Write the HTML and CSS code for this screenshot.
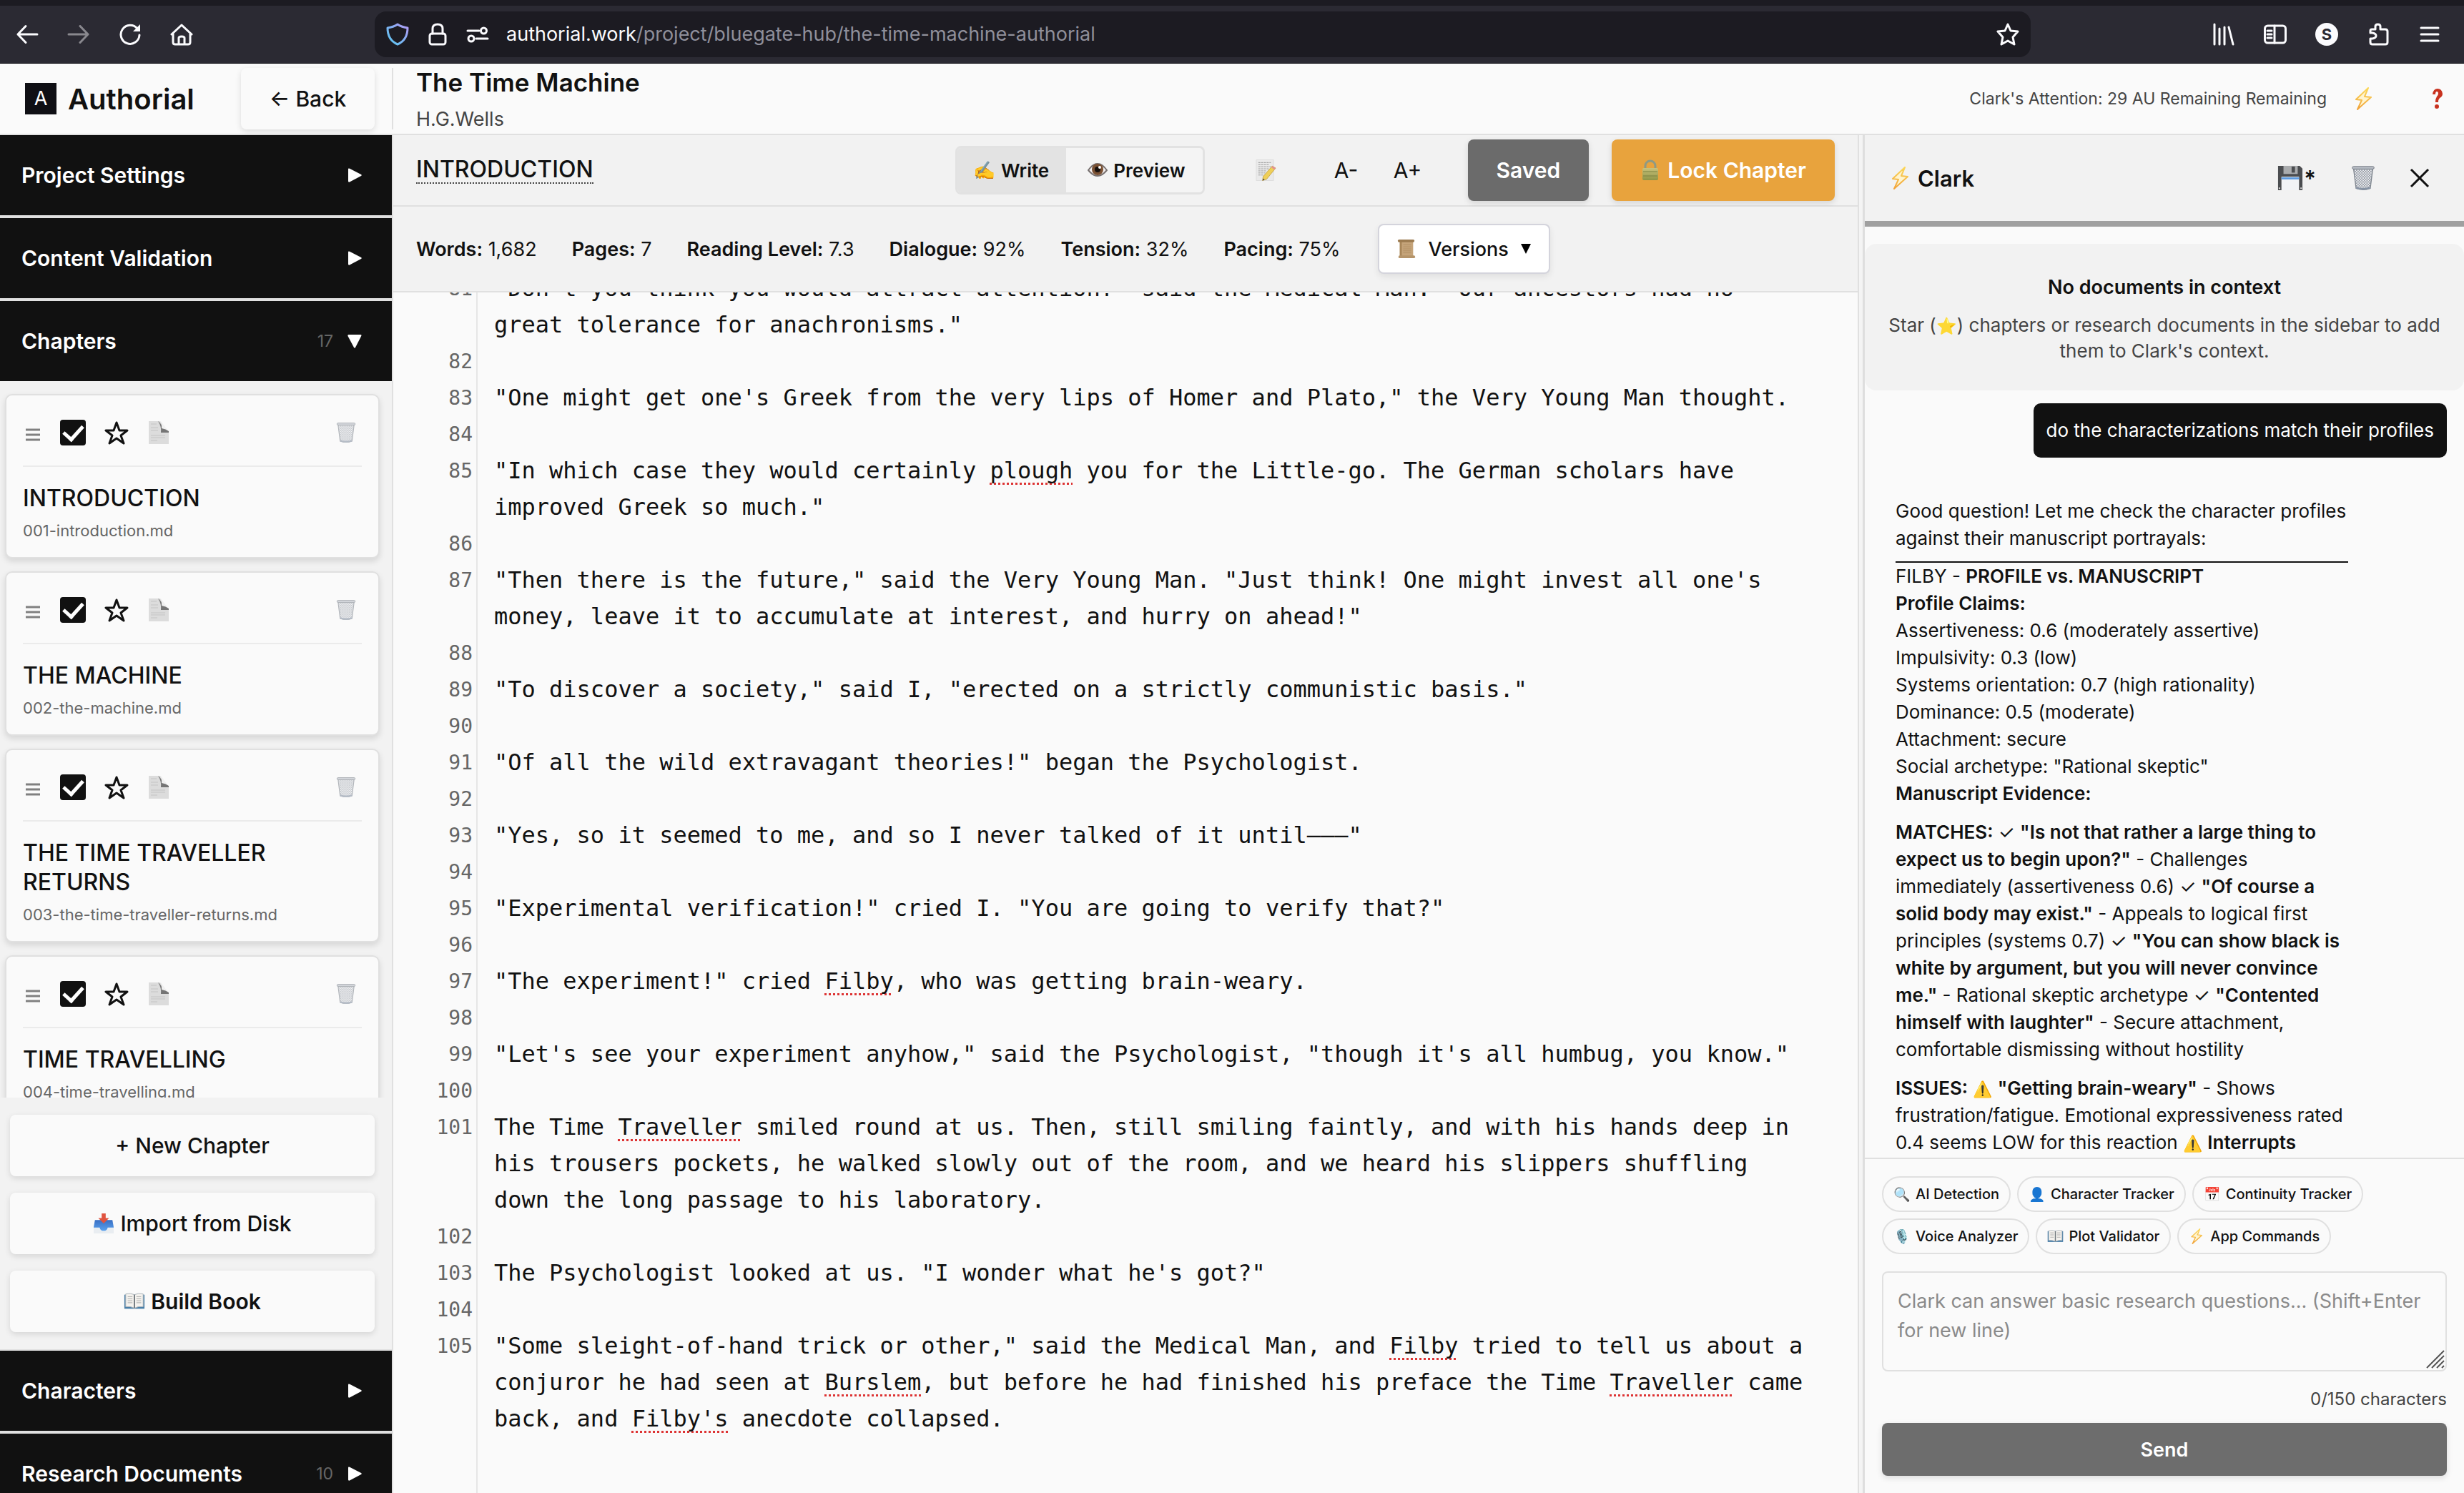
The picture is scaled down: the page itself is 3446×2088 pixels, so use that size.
FILE: index.html
```html
<!DOCTYPE html>
<html lang="en">
<head>
    <meta charset="UTF-8">
    <meta name="viewport" content="width=device-width, initial-scale=1.0">
    <title>The Time Machine - Authorial</title>
    <link rel="stylesheet" href="styles.css">
</head>
<body>
    <!-- Shared icons -->
    <svg class="sprite" aria-hidden="true">
        <defs>
            <linearGradient id="shield-fill" x1="1" y1="0" x2="0" y2="1">
                <stop offset="0" stop-color="#b69af5"/>
                <stop offset="0.5" stop-color="#7fb0f2"/>
                <stop offset="1" stop-color="#59c8f0"/>
            </linearGradient>
            <linearGradient id="bolt-fill" x1="0" y1="0" x2="0" y2="1">
                <stop offset="0" stop-color="#fbd85a"/>
                <stop offset="1" stop-color="#f1a33a"/>
            </linearGradient>
            <linearGradient id="brass" x1="0" y1="0" x2="0" y2="1">
                <stop offset="0" stop-color="#c9c27c"/>
                <stop offset="1" stop-color="#8f9445"/>
            </linearGradient>
            <linearGradient id="tray" x1="0" y1="0" x2="0" y2="1">
                <stop offset="0" stop-color="#3a6fc4"/>
                <stop offset="1" stop-color="#5aa2ee"/>
            </linearGradient>
            <pattern id="mesh" width="4" height="4" patternUnits="userSpaceOnUse">
                <path d="M0 0l4 4M4 0L0 4" stroke="#7d848e" stroke-width="0.8"/>
            </pattern>
        </defs>
        <symbol id="bolt" viewBox="0 0 28 32">
            <path d="M20 1L3 17l8 1-6 13 19-17-9-1z" fill="#fff4cf" stroke="url(#bolt-fill)" stroke-width="2" stroke-linejoin="round"/>
        </symbol>
        <symbol id="trash" viewBox="0 0 36 40">
            <path d="M3 5l4 31q11 4 22 0l4-31z" fill="#eef0f3"/>
            <path d="M3 5l4 31q11 4 22 0l4-31z" fill="url(#mesh)" stroke="#7f868f" stroke-width="1.5"/>
            <rect x="1" y="2" width="34" height="4" rx="2" fill="#b9bec6" stroke="#6a717b"/>
            <path d="M7 35q11 4 22 0" stroke="#8894a5" stroke-width="3" fill="none"/>
        </symbol>
        <symbol id="page" viewBox="0 0 28 32">
            <path d="M0 0h16l12 15v17H0z" fill="#dcdcdc"/>
            <path d="M16 0q3 5 2 10 5 1 10 5L17 0z" fill="#f0f0f0"/>
            <path d="M13 0q6 4 5 10 6 1 10 4l0 2H17q1-9-4-16z" fill="#757575"/>
            <path d="M3 4h8M3 20h20M3 23h20M3 27h9M3 9h10M3 13h10" stroke="#c4c4c4"/>
        </symbol>
        <symbol id="floppy" viewBox="0 0 38 38">
            <path d="M1 1h32l4 4v32H1z" fill="#4b4d50"/>
            <path d="M9 1h21v12H9z" fill="#a9abad"/>
            <rect x="21" y="2" width="5" height="9" fill="#4b4d50"/>
            <path d="M6 17h26v20H6z" fill="#f1f3f6"/>
            <path d="M6 18h26v3H6z" fill="#5d9be0"/>
            <path d="M2 33h2v2H2zM34 33h2v2h-2z" fill="#e4e4e4"/>
        </symbol>
        <symbol id="book" viewBox="0 0 32 26">
            <path d="M1 3h30v21H1z" fill="#4a7fa8"/>
            <path d="M3 2q7-2 13 1 6-3 13-1v19q-7-1-13 2-6-3-13-2z" fill="#f4f2ee" stroke="#a9b1b8"/>
            <path d="M16 3v20" stroke="#6f777d" stroke-width="2"/>
            <path d="M6 6h7M6 9h7M6 12h7M6 15h7M19 6h7M19 9h7M19 12h7M19 15h7" stroke="#aaa"/>
        </symbol>
        <symbol id="note" viewBox="0 0 30 32">
            <path d="M1 1h25v30H1z" fill="#eaeaea" stroke="#dddddd"/>
            <path d="M4 5h18M4 8h16M4 11h18M4 14h15M4 17h12M4 20h10M4 23h8" stroke="#999999" stroke-dasharray="3 1"/>
            <path d="M24 10l5 3-13 16-6 2 1-6z" fill="#efcf58" stroke="#b7902c" stroke-width="0.7"/>
            <path d="M24 10l5 3-2 2-4-3z" fill="#e58f95"/>
            <path d="M10 31l1-3 2 2z" fill="#444"/>
        </symbol>
        <symbol id="scroll" viewBox="0 0 28 30">
            <path d="M4 3h20v24H4z" fill="#c5a47a"/>
            <path d="M4 3h3v24H4z" fill="#a88659"/>
            <rect x="1" y="1" width="25" height="4" rx="2" fill="#9c7b50"/>
            <rect x="2" y="25" width="25" height="4" rx="2" fill="#b5946a"/>
            <path d="M9 9h12M9 12h12M9 15h12M9 18h12M9 21h12" stroke="#b08f63"/>
        </symbol>
        <symbol id="padlock" viewBox="0 0 28 30">
            <path d="M7 15V9a7 7 0 0 1 14 0v6" fill="none" stroke="#8e9a84" stroke-width="3"/>
            <rect x="3" y="12" width="22" height="17" rx="2" fill="url(#brass)"/>
            <path d="M4 17h20M4 23h20" stroke="#7d8340"/>
        </symbol>
        <symbol id="eye" viewBox="0 0 28 24">
            <path d="M1 12Q14-6 27 12 14 28 1 12z" fill="#f3efef" stroke="#77706f" stroke-width="2"/>
            <circle cx="14" cy="11" r="8" fill="#7a5133"/>
            <circle cx="14" cy="11" r="4" fill="#17100c"/>
            <circle cx="17" cy="8" r="2" fill="#fff"/>
        </symbol>
        <symbol id="inbox" viewBox="0 0 32 32">
            <path d="M3 11h26l2 11v9H1v-9z" fill="#e9edf1"/>
            <path d="M3 11h26l2 11h-9q-1 5-6 5t-6-5H1z" fill="url(#tray)"/>
            <path d="M13 1h6v7h5l-8 8-8-8h5z" fill="#e0533f"/>
        </symbol>
        <symbol id="drag" viewBox="0 0 20 18">
            <path d="M0 2h20M0 9h20M0 16h20" stroke="#808080" stroke-width="3"/>
        </symbol>
        <symbol id="star" viewBox="0 0 34 34">
            <path d="M17 3l4 11h11l-9 7 4 11-10-7-10 7 4-11-9-7h11z" fill="none" stroke="#111" stroke-width="3" stroke-linejoin="round"/>
        </symbol>
        <symbol id="right" viewBox="0 0 20 20">
            <path d="M1 1.5Q1 0 3 .8L19 9q1.500 1 0 2L3 19.500Q1 20 1 18.500z" fill="#fff"/>
        </symbol>
    </svg>

    <!-- Browser toolbar -->
    <header class="browser">
        <nav class="browser-icons" aria-label="Browser">
            <button class="bare" aria-label="Go back"><svg class="chrome-icon" viewBox="0 0 32 32"><path d="M30 16H3M14 4.500L3 16l11 11.500"/></svg></button>
            <button class="bare dim" aria-label="Go forward"><svg class="chrome-icon" viewBox="0 0 32 32"><path d="M2 16h27M18 4.500L29 16 18 27.500"/></svg></button>
            <button class="bare" aria-label="Reload"><svg class="chrome-icon" viewBox="0 0 32 32"><path d="M26 8a13 13 0 1 0 3 9"/><path d="M30 2v10H20z" fill="#fbfbfe" stroke="none"/></svg></button>
            <button class="bare" aria-label="Home"><svg class="chrome-icon" viewBox="0 0 32 32"><path d="M2 16L16 3l14 13M4 15v12q0 3 3 3h18q3 0 3-3V15M12 30V21q0-2 4-2t4 2v9"/></svg></button>
        </nav>
        <div class="urlbar">
            <svg class="chrome-icon shield" viewBox="0 0 32 32"><path d="M16 2q6 4 14 5 0 17-14 23Q2 24 2 7q8-1 14-5z"/></svg>
            <svg class="chrome-icon" viewBox="0 0 32 32"><rect x="5" y="15" width="22" height="15" rx="3"/><path d="M9 15V8q0-6 7-6t7 6v7"/></svg>
            <svg class="chrome-icon" viewBox="0 0 32 32"><path d="M2 11h16M14 22h16"/><circle cx="24.500" cy="11" r="4"/><circle cx="7" cy="22" r="4"/></svg>
            <p class="url">authorial.work<span>/project/bluegate-hub/the-time-machine-authorial</span></p>
            <button class="bare" aria-label="Bookmark"><svg class="chrome-icon" viewBox="0 0 32 32"><path d="M16 2l4 9 10 1-7 8 2 10-9-5-9 5 2-10-7-8 10-1z"/></svg></button>
        </div>
        <div class="browser-icons">
            <button class="bare" aria-label="Library"><svg class="chrome-icon" viewBox="0 0 32 32"><path d="M3 2v28M10 8v22M17 6v24M23 6l6 24"/></svg></button>
            <button class="bare" aria-label="Sidebars"><svg class="chrome-icon" viewBox="0 0 32 32"><rect x="1.500" y="4" width="29" height="24" rx="4"/><path d="M15 4v24M5 11h6M5 16h6M5 21h6"/></svg></button>
            <button class="avatar">S</button>
            <button class="bare" aria-label="Extensions"><svg class="chrome-icon" viewBox="0 0 32 32"><path d="M5 11q0-2 2-2h5V5q0-3 3.500-3T19 5v4h7q3 0 3 3v15q0 3-3 3H8q-3 0-3-3v-5h3q5-1 5-4t-5-4H5z"/></svg></button>
            <button class="bare" aria-label="Menu"><svg class="chrome-icon" viewBox="0 0 32 32"><path d="M4 7h24M4 16h24M4 25h24"/></svg></button>
        </div>
    </header>

    <!-- App header -->
    <header class="app-header">
        <div class="brand">
            <span class="logo">A</span>
            <span class="brand-name">Authorial</span>
            <button class="back">← Back</button>
        </div>
        <div class="project">
            <h1>The Time Machine</h1>
            <p>H.G.Wells</p>
        </div>
        <div class="account">
            <span>Clark's Attention: 29 AU Remaining Remaining</span>
            <button class="bare" aria-label="Toggle Clark"><svg class="bolt"><use href="#bolt"/></svg></button>
            <button class="bare help" aria-label="Help"><svg viewBox="0 0 16 28"><path d="M1 8Q2 0 8 0t7 7q0 4-4 6-2 2-2 6H5q0-5 2-8 2-2 2-4 0-3-2-3Q5 4 5 8z" fill="#c8321f"/><circle cx="7" cy="25" r="3" fill="#c8321f"/></svg></button>
        </div>
    </header>

    <div class="workspace">
        <aside class="sidebar">
            <button class="section">Project Settings <svg class="arrow"><use href="#right"/></svg></button>
            <button class="section">Content Validation <svg class="arrow"><use href="#right"/></svg></button>
            <button class="section open">Chapters <span class="count">17</span><svg class="arrow down"><use href="#right"/></svg></button>

            <div class="chapter-list">
                <article class="card">
                    <div class="card-head">
                        <svg class="drag"><use href="#drag"/></svg>
                        <input type="checkbox" class="check" aria-label="Include Introduction" checked>
                        <button class="bare" aria-label="Star"><svg class="star"><use href="#star"/></svg></button>
                        <button class="bare" aria-label="Notes"><svg class="page"><use href="#page"/></svg></button>
                        <button class="bare delete" aria-label="Delete"><svg class="bin"><use href="#trash"/></svg></button>
                    </div>
                    <h3>INTRODUCTION</h3>
                    <p>001-introduction.md</p>
                </article>
                <article class="card">
                    <div class="card-head">
                        <svg class="drag"><use href="#drag"/></svg>
                        <input type="checkbox" class="check" aria-label="Include The Machine" checked>
                        <button class="bare" aria-label="Star"><svg class="star"><use href="#star"/></svg></button>
                        <button class="bare" aria-label="Notes"><svg class="page"><use href="#page"/></svg></button>
                        <button class="bare delete" aria-label="Delete"><svg class="bin"><use href="#trash"/></svg></button>
                    </div>
                    <h3>THE MACHINE</h3>
                    <p>002-the-machine.md</p>
                </article>
                <article class="card">
                    <div class="card-head">
                        <svg class="drag"><use href="#drag"/></svg>
                        <input type="checkbox" class="check" aria-label="Include The Time Traveller Returns" checked>
                        <button class="bare" aria-label="Star"><svg class="star"><use href="#star"/></svg></button>
                        <button class="bare" aria-label="Notes"><svg class="page"><use href="#page"/></svg></button>
                        <button class="bare delete" aria-label="Delete"><svg class="bin"><use href="#trash"/></svg></button>
                    </div>
                    <h3>THE TIME TRAVELLER RETURNS</h3>
                    <p>003-the-time-traveller-returns.md</p>
                </article>
                <article class="card">
                    <div class="card-head">
                        <svg class="drag"><use href="#drag"/></svg>
                        <input type="checkbox" class="check" aria-label="Include Time Travelling" checked>
                        <button class="bare" aria-label="Star"><svg class="star"><use href="#star"/></svg></button>
                        <button class="bare" aria-label="Notes"><svg class="page"><use href="#page"/></svg></button>
                        <button class="bare delete" aria-label="Delete"><svg class="bin"><use href="#trash"/></svg></button>
                    </div>
                    <h3>TIME TRAVELLING</h3>
                    <p>004-time-travelling.md</p>
                </article>
            </div>

            <div class="chapter-actions">
                <button class="action">+ New Chapter</button>
                <button class="action"><svg class="inbox"><use href="#inbox"/></svg>Import from Disk</button>
                <button class="action strong"><svg class="book"><use href="#book"/></svg>Build Book</button>
            </div>

            <button class="section">Characters <svg class="arrow"><use href="#right"/></svg></button>
            <button class="section">Research Documents <span class="count">10</span><svg class="arrow"><use href="#right"/></svg></button>
        </aside>

        <main class="main">
            <div class="toolbar">
                <h2>INTRODUCTION</h2>
                <div class="tools">
                    <div class="toggle">
                        <button class="active"><span class="emoji">✍️</span>Write</button>
                        <button><svg class="eye"><use href="#eye"/></svg>Preview</button>
                    </div>
                    <button class="bare notes" aria-label="Notes"><svg class="note"><use href="#note"/></svg></button>
                    <div class="font-size">
                        <button class="bare">A-</button>
                        <button class="bare">A+</button>
                    </div>
                    <button class="btn saved">Saved</button>
                    <button class="btn lock"><svg class="padlock"><use href="#padlock"/></svg>Lock Chapter</button>
                </div>
            </div>

            <div class="stats">
                <span><b>Words:</b> 1,682</span>
                <span><b>Pages:</b> 7</span>
                <span><b>Reading Level:</b> 7.3</span>
                <span><b>Dialogue:</b> 92%</span>
                <span><b>Tension:</b> 32%</span>
                <span><b>Pacing:</b> 75%</span>
                <button class="versions"><svg class="scroll"><use href="#scroll"/></svg>Versions <svg class="caret" viewBox="0 0 16 16"><path d="M1 1h14L8 15z"/></svg></button>
            </div>

            <div class="editor">
                <div class="line"><span class="num">81</span><p>"Don't you think you would attract attention?" said the Medical Man. "Our ancestors had no great tolerance for anachronisms."</p></div>
                <div class="line"><span class="num">82</span><p></p></div>
                <div class="line"><span class="num">83</span><p>"One might get one's Greek from the very lips of Homer and Plato," the Very Young Man thought.</p></div>
                <div class="line"><span class="num">84</span><p></p></div>
                <div class="line"><span class="num">85</span><p>"In which case they would certainly <u>plough</u> you for the Little-go. The German scholars have improved Greek so much."</p></div>
                <div class="line"><span class="num">86</span><p></p></div>
                <div class="line"><span class="num">87</span><p>"Then there is the future," said the Very Young Man. "Just think! One might invest all one's money, leave it to accumulate at interest, and hurry on ahead!"</p></div>
                <div class="line"><span class="num">88</span><p></p></div>
                <div class="line"><span class="num">89</span><p>"To discover a society," said I, "erected on a strictly communistic basis."</p></div>
                <div class="line"><span class="num">90</span><p></p></div>
                <div class="line"><span class="num">91</span><p>"Of all the wild extravagant theories!" began the Psychologist.</p></div>
                <div class="line"><span class="num">92</span><p></p></div>
                <div class="line"><span class="num">93</span><p>"Yes, so it seemed to me, and so I never talked of it until———"</p></div>
                <div class="line"><span class="num">94</span><p></p></div>
                <div class="line"><span class="num">95</span><p>"Experimental verification!" cried I. "You are going to verify that?"</p></div>
                <div class="line"><span class="num">96</span><p></p></div>
                <div class="line"><span class="num">97</span><p>"The experiment!" cried <u>Filby</u>, who was getting brain-weary.</p></div>
                <div class="line"><span class="num">98</span><p></p></div>
                <div class="line"><span class="num">99</span><p>"Let's see your experiment anyhow," said the Psychologist, "though it's all humbug, you know."</p></div>
                <div class="line"><span class="num">100</span><p></p></div>
                <div class="line"><span class="num">101</span><p>The Time <u>Traveller</u> smiled round at us. Then, still smiling faintly, and with his hands deep in his trousers pockets, he walked slowly out of the room, and we heard his slippers shuffling down the long passage to his laboratory.</p></div>
                <div class="line"><span class="num">102</span><p></p></div>
                <div class="line"><span class="num">103</span><p>The Psychologist looked at us. "I wonder what he's got?"</p></div>
                <div class="line"><span class="num">104</span><p></p></div>
                <div class="line"><span class="num">105</span><p>"Some sleight-of-hand trick or other," said the Medical Man, and <u>Filby</u> tried to tell us about a conjuror he had seen at <u>Burslem</u>, but before he had finished his preface the Time <u>Traveller</u> came back, and <u>Filby's</u> anecdote collapsed.</p></div>
                <div class="line end"><span class="num"></span><p></p></div>
            </div>
        </main>

        <div class="resizer"></div>

        <aside class="clark">
            <div class="clark-head">
                <svg class="bolt"><use href="#bolt"/></svg>
                <h2>Clark</h2>
                <button class="bare save" aria-label="Save conversation"><svg class="floppy"><use href="#floppy"/></svg>*</button>
                <button class="bare" aria-label="Clear conversation"><svg class="trash"><use href="#trash"/></svg></button>
                <button class="bare" aria-label="Close"><svg class="close" viewBox="0 0 28 28"><path d="M2 2l24 24M26 2L2 26"/></svg></button>
            </div>

            <div class="chat">
                <div class="context">
                    <h3>No documents in context</h3>
                    <p>Star (<span class="emoji">⭐</span>) chapters or research documents in the sidebar to add them to Clark's context.</p>
                </div>
                <p class="bubble">do the characterizations match their profiles</p>
                <div class="reply">
                    <p>Good question! Let me check the character profiles against their manuscript portrayals:</p>
                    <hr>
                    <p>FILBY - <b>PROFILE vs. MANUSCRIPT</b><br>
                    <b>Profile Claims:</b><br>
                    Assertiveness: 0.6 (moderately assertive)<br>
                    Impulsivity: 0.3 (low)<br>
                    Systems orientation: 0.7 (high rationality)<br>
                    Dominance: 0.5 (moderate)<br>
                    Attachment: secure<br>
                    Social archetype: "Rational skeptic"<br>
                    <b>Manuscript Evidence:</b></p>
                    <p class="block"><b>MATCHES:</b> ✓ <b>"Is not that rather a large thing to expect us to begin upon?"</b> - Challenges immediately (assertiveness 0.6) ✓ <b>"Of course a solid body may exist."</b> - Appeals to logical first principles (systems 0.7) ✓ <b>"You can show black is white by argument, but you will never convince me."</b> - Rational skeptic archetype ✓ <b>"Contented himself with laughter"</b> - Secure attachment, comfortable dismissing without hostility</p>
                    <p class="block"><b>ISSUES:</b> <span class="emoji">⚠️</span> <b>"Getting brain-weary"</b> - Shows frustration/fatigue. Emotional expressiveness rated 0.4 seems LOW for this reaction <span class="emoji">⚠️</span> <b>Interrupts</b></p>
                </div>
            </div>

            <form class="composer">
                <div class="chips">
                    <button type="button" class="chip"><span class="emoji">🔍</span>AI Detection</button>
                    <button type="button" class="chip"><span class="emoji">👤</span>Character Tracker</button>
                    <button type="button" class="chip"><span class="emoji">📅</span>Continuity Tracker</button>
                    <button type="button" class="chip"><span class="emoji">🎙️</span>Voice Analyzer</button>
                    <button type="button" class="chip"><svg class="chip-icon"><use href="#book"/></svg>Plot Validator</button>
                    <button type="button" class="chip"><svg class="chip-icon"><use href="#bolt"/></svg>App Commands</button>
                </div>
                <div class="field">
                    <textarea aria-label="Message Clark" placeholder="Clark can answer basic research questions... (Shift+Enter for new line)"></textarea>
                    <svg class="grip" viewBox="0 0 26 26"><path d="M1 25L25 1M8 25L25 8M15 25l10-10M22 25l3-3"/></svg>
                </div>
                <p class="counter">0/150 characters</p>
                <button type="submit" class="send">Send</button>
            </form>
        </aside>
    </div>
</body>
</html>
```
FILE: styles.css
```css
* {
    box-sizing: border-box;
    margin: 0;
    padding: 0;
}

body {
    display: flex;
    flex-direction: column;
    height: 100vh;
    overflow: hidden;
    font-family: Inter, sans-serif;
    font-size: 26px;
    color: #111;
    background-color: #fafafa;
}

button {
    font-family: inherit;
    color: inherit;
    cursor: pointer;
    border: none;
}

svg {
    display: block;
    flex-shrink: 0;
}

.sprite {
    position: absolute;
    width: 0;
    height: 0;
}

.bare {
    display: flex;
    align-items: center;
    justify-content: center;
    background: none;
}

/* Browser toolbar */
.browser {
    display: flex;
    align-items: center;
    height: 89px;
    padding: 0 32px 0 22px;
    border-top: 8px solid #1c1b22;
    border-bottom: 1px solid #0c0c12;
    background-color: #2b2a33;
    flex-shrink: 0;
}

.browser-icons {
    display: flex;
    gap: 40px;
}

.chrome-icon {
    width: 32px;
    height: 32px;
    fill: none;
    stroke: #fbfbfe;
    stroke-width: 3;
    stroke-linecap: round;
    stroke-linejoin: round;
}

.shield {
    stroke: url(#shield-fill);
}

.dim {
    opacity: 0.45;
}

.urlbar {
    display: flex;
    flex: 1;
    align-items: center;
    gap: 24px;
    height: 64px;
    margin: 0 254px;
    padding: 0 16px;
    border-radius: 16px;
    background-color: #1c1b22;
}

.url {
    flex: 1;
    color: #fbfbfe;
    font-size: 27px;
    line-height: 36px;
}

.url span {
    color: #8f8f9a;
}

.avatar {
    width: 32px;
    height: 32px;
    border-radius: 50%;
    background-color: #fbfbfe;
    color: #2b2a33;
    font-size: 22px;
    font-weight: 700;
}

/* App header */
.app-header {
    display: flex;
    height: 100px;
    border-bottom: 2px solid #e0e0e0;
    flex-shrink: 0;
}

.brand {
    display: flex;
    align-items: center;
    width: 550px;
    margin: 6px 0;
    padding: 0 24px 0 35px;
    border-right: 2px solid #e0e0e0;
}

.logo {
    width: 44px;
    height: 44px;
    background-color: #0f0f14;
    color: #fff;
    font-size: 27px;
    line-height: 44px;
    text-align: center;
}

.brand-name {
    margin-left: 16px;
    font-size: 40px;
    font-weight: 600;
}

.back {
    width: 187px;
    height: 86px;
    margin-left: auto;
    border-radius: 8px;
    background-color: #fafafa;
    box-shadow: 0 3px 8px rgba(0, 0, 0, 0.12);
    font-size: 30px;
    font-weight: 500;
}

.project {
    flex: 1;
    padding: 0 32px;
}

.project h1 {
    margin-top: 5px;
    font-size: 35px;
    font-weight: 600;
    line-height: 42px;
}

.project p {
    margin-top: 15px;
    color: #444;
    font-size: 27px;
    line-height: 32px;
}

.account {
    display: flex;
    align-items: center;
    padding-right: 28px;
    color: #444;
    font-size: 23px;
}

.bolt {
    width: 28px;
    height: 32px;
}

.account .bolt {
    margin-left: 38px;
}

.help {
    margin-left: 80px;
}

.help svg {
    width: 18px;
    height: 28px;
}

.workspace {
    display: flex;
    flex: 1;
    min-height: 0;
}

/* Sidebar */
.sidebar {
    width: 550px;
    overflow: hidden;
    border-right: 2px solid #e0e0e0;
    background-color: #f2f2f2;
    flex-shrink: 0;
}

.section {
    display: flex;
    align-items: center;
    width: 100%;
    height: 116px;
    padding: 0 42px 0 30px;
    border-bottom: 4px solid #e0e0e0;
    background-color: #111;
    color: #fff;
    font-size: 30px;
    font-weight: 600;
}

.section.open {
    height: 112px;
    border-bottom: none;
}

.count {
    margin-left: auto;
    color: #666;
    font-size: 23px;
    font-weight: 400;
}

.arrow {
    width: 20px;
    height: 20px;
    margin-left: auto;
}

.count + .arrow {
    margin-left: 20px;
}

.arrow.down {
    transform: rotate(90deg);
}

.chapter-list {
    display: flex;
    flex-direction: column;
    gap: 18px;
    height: 48vh;
    overflow: hidden;
    padding: 18px 17px 0 7px;
}

.card {
    padding: 34px 23px 20px;
    border: 2px solid #e0e0e0;
    border-radius: 10px;
    background-color: #fafafa;
    box-shadow: 0 4px 8px rgba(0, 0, 0, 0.12);
    flex-shrink: 0;
}

.card-head {
    display: flex;
    align-items: center;
    padding: 0 8px 28px 4px;
    border-bottom: 2px solid #ebebeb;
}

.drag {
    width: 20px;
    height: 18px;
    margin-top: 6px;
}

.check {
    appearance: none;
    display: grid;
    place-items: center;
    width: 36px;
    height: 36px;
    margin: 0 26px 0 28px;
    border-radius: 4px;
    background-color: #111;
}

.check:checked::before {
    content: "";
    width: 12px;
    height: 22px;
    margin-bottom: 6px;
    border: solid #fff;
    border-width: 0 5px 5px 0;
    transform: rotate(42deg);
}

.star {
    width: 34px;
    height: 34px;
}

.page {
    width: 28px;
    height: 32px;
    margin-left: 28px;
}

.delete {
    margin-left: auto;
    opacity: 0.6;
}

.bin {
    width: 28px;
    height: 30px;
}

.card h3 {
    margin-top: 23px;
    font-size: 32px;
    font-weight: 500;
    line-height: 41px;
}

.card p {
    margin-top: 8px;
    color: #666;
    font-size: 22px;
    line-height: 34px;
}

.chapter-actions {
    display: flex;
    flex-direction: column;
    gap: 23px;
    padding: 24px 24px 24px 14px;
    border-bottom: 2px solid #e0e0e0;
}

.action {
    display: flex;
    align-items: center;
    justify-content: center;
    gap: 8px;
    height: 86px;
    border-radius: 8px;
    background-color: #fafafa;
    box-shadow: 0 3px 8px rgba(0, 0, 0, 0.12);
    font-size: 30px;
    font-weight: 500;
}

.action.strong {
    font-weight: 600;
}

.inbox {
    width: 30px;
    height: 32px;
}

.book {
    width: 30px;
    height: 26px;
}

/* Editor column */
.main {
    display: flex;
    flex: 1;
    flex-direction: column;
    min-width: 0;
    border-right: 2px solid #e0e0e0;
}

.toolbar {
    display: flex;
    align-items: center;
    justify-content: space-between;
    height: 100px;
    padding: 0 32px;
    border-bottom: 2px solid #e0e0e0;
    background-color: #f2f2f2;
    flex-shrink: 0;
}

.toolbar h2 {
    border-bottom: 2px dotted #444;
    font-size: 32px;
    font-weight: 500;
    line-height: 36px;
}

.tools {
    display: flex;
    align-items: center;
    gap: 32px;
}

.toggle {
    display: flex;
    overflow: hidden;
    border: 3px solid #e2e2e2;
    border-radius: 8px;
}

.toggle button {
    display: flex;
    align-items: center;
    gap: 8px;
    height: 62px;
    padding: 0 24px;
    background-color: #f4f4f4;
    font-size: 26px;
    font-weight: 600;
}

.toggle button + button {
    padding-left: 30px;
}

.toggle .active {
    padding-left: 22px;
    background-color: #e3e3e3;
}

.toggle .emoji {
    font-size: 25px;
}

.eye {
    width: 28px;
    height: 24px;
}

.notes {
    width: 108px;
}

.note {
    width: 29px;
    height: 32px;
}

.font-size {
    display: flex;
    gap: 34px;
}

.font-size button {
    width: 52px;
    font-size: 30px;
}

.btn {
    display: flex;
    align-items: center;
    gap: 10px;
    height: 86px;
    padding: 0 40px;
    border-radius: 8px;
    box-shadow: 0 3px 8px rgba(0, 0, 0, 0.12);
    color: #fff;
    font-size: 30px;
    font-weight: 600;
}

.saved {
    margin-left: 26px;
    background-color: #6b6b6b;
}

.lock {
    background-color: #e8a33d;
}

.padlock {
    width: 28px;
    height: 32px;
}

.stats {
    display: flex;
    align-items: center;
    gap: 49px;
    height: 120px;
    padding-left: 32px;
    border-bottom: 2px solid #e0e0e0;
    background-color: #f2f2f2;
    font-size: 27px;
    flex-shrink: 0;
}

.stats b {
    font-weight: 600;
}

.versions {
    display: flex;
    align-items: center;
    gap: 16px;
    height: 70px;
    margin-left: 4px;
    padding: 0 24px;
    border: 2px solid #d4d4dc;
    border-radius: 8px;
    background-color: #fff;
    box-shadow: 0 4px 10px rgba(0, 0, 0, 0.08);
    font-size: 27px;
    font-weight: 500;
}

.scroll {
    width: 28px;
    height: 28px;
}

.caret {
    width: 16px;
    height: 16px;
}

.editor {
    display: flex;
    flex: 1;
    flex-direction: column;
    justify-content: flex-end;
    overflow: hidden;
    min-height: 0;
    font-family: "DejaVu Sans Mono", monospace;
    font-size: 32px;
    line-height: 51px;
}

.line {
    display: flex;
    min-height: 51px;
    flex-shrink: 0;
}

.line p {
    flex: 1;
    padding: 0 67px 0 23px;
}

.num {
    width: 118px;
    padding-right: 5px;
    border-right: 2px solid #e6e6e6;
    color: #666;
    font-size: 28px;
    text-align: right;
}

.line.end {
    height: 78px;
}

.line u {
    text-decoration: underline dotted #d33 3px;
    text-underline-offset: 6px;
    text-decoration-skip-ink: none;
}

.resizer {
    width: 5px;
    background-color: #f4f4f4;
    cursor: col-resize;
}

/* Clark panel */
.clark {
    display: flex;
    flex-direction: column;
    width: 841px;
    border-left: 3px solid #dedede;
    flex-shrink: 0;
}

.clark-head {
    display: flex;
    align-items: center;
    height: 128px;
    padding: 0 48px 0 36px;
    border-bottom: 8px solid #a0a0a0;
    background-color: #f2f2f2;
    flex-shrink: 0;
}

.clark-head h2 {
    margin: 0 auto 0 10px;
    font-size: 31px;
    font-weight: 600;
}

.save {
    font-size: 31px;
    font-weight: 600;
}

.floppy {
    width: 38px;
    height: 36px;
}

.trash {
    width: 36px;
    height: 36px;
    margin: 0 47px 0 48px;
}

.close {
    width: 28px;
    height: 28px;
    stroke: #111;
    stroke-width: 3;
}

.chat {
    display: flex;
    flex: 1;
    flex-direction: column;
    min-height: 0;
    overflow: hidden;
    padding-top: 24px;
}

.context {
    padding: 44px 28px 37px;
    border-radius: 16px;
    background-color: #f2f2f2;
    text-align: center;
    flex-shrink: 0;
}

.context h3 {
    margin-bottom: 18px;
    font-size: 27px;
    font-weight: 600;
    line-height: 34px;
}

.context p {
    color: #444;
    line-height: 36px;
}

.context .emoji {
    font-size: 23px;
    line-height: 30px;
}

.bubble {
    align-self: flex-end;
    margin: 18px 24px 56px 0;
    padding: 0 18px;
    border-radius: 10px;
    background-color: #111;
    color: #fff;
    line-height: 76px;
    flex-shrink: 0;
}

.reply {
    width: 676px;
    padding-left: 43px;
    line-height: 38px;
    flex-shrink: 0;
}

.reply b {
    font-weight: 600;
}

.reply hr {
    margin: 13px 0 0;
    border: none;
    border-top: 2px solid #111;
}

.reply .block {
    margin-top: 16px;
}

.reply .emoji {
    font-size: 22px;
    line-height: 30px;
}

.composer {
    padding: 24px;
    border-top: 2px solid #e0e0e0;
    flex-shrink: 0;
}

.chips {
    display: flex;
    flex-wrap: wrap;
    gap: 9px;
}

.chip {
    display: flex;
    align-items: center;
    gap: 7px;
    height: 50px;
    padding: 0 14px;
    border: 2px solid #e0e0e0;
    border-radius: 25px;
    background-color: #fafafa;
    font-size: 20px;
    font-weight: 500;
}

.chip .emoji {
    font-size: 19px;
}

.chip-icon {
    width: 23px;
    height: 22px;
}

.field {
    position: relative;
    margin-top: 24px;
}

textarea {
    display: block;
    width: 100%;
    height: 140px;
    padding: 19px 20px;
    border: 2px solid #e0e0e0;
    border-radius: 8px;
    background-color: #fafafa;
    font-family: inherit;
    font-size: 27px;
    line-height: 41px;
    resize: none;
}

textarea::placeholder {
    color: #8a8a8a;
}

.grip {
    position: absolute;
    right: 3px;
    bottom: 4px;
    width: 26px;
    height: 26px;
    stroke: #555;
    stroke-width: 2;
}

.counter {
    margin: 23px 0 17px;
    color: #444;
    font-size: 24px;
    line-height: 32px;
    text-align: right;
}

.send {
    display: block;
    width: 100%;
    height: 74px;
    border-radius: 8px;
    background-color: #6d6d6d;
    box-shadow: 0 3px 8px rgba(0, 0, 0, 0.12);
    color: #fff;
    font-size: 27px;
    font-weight: 600;
}
```
